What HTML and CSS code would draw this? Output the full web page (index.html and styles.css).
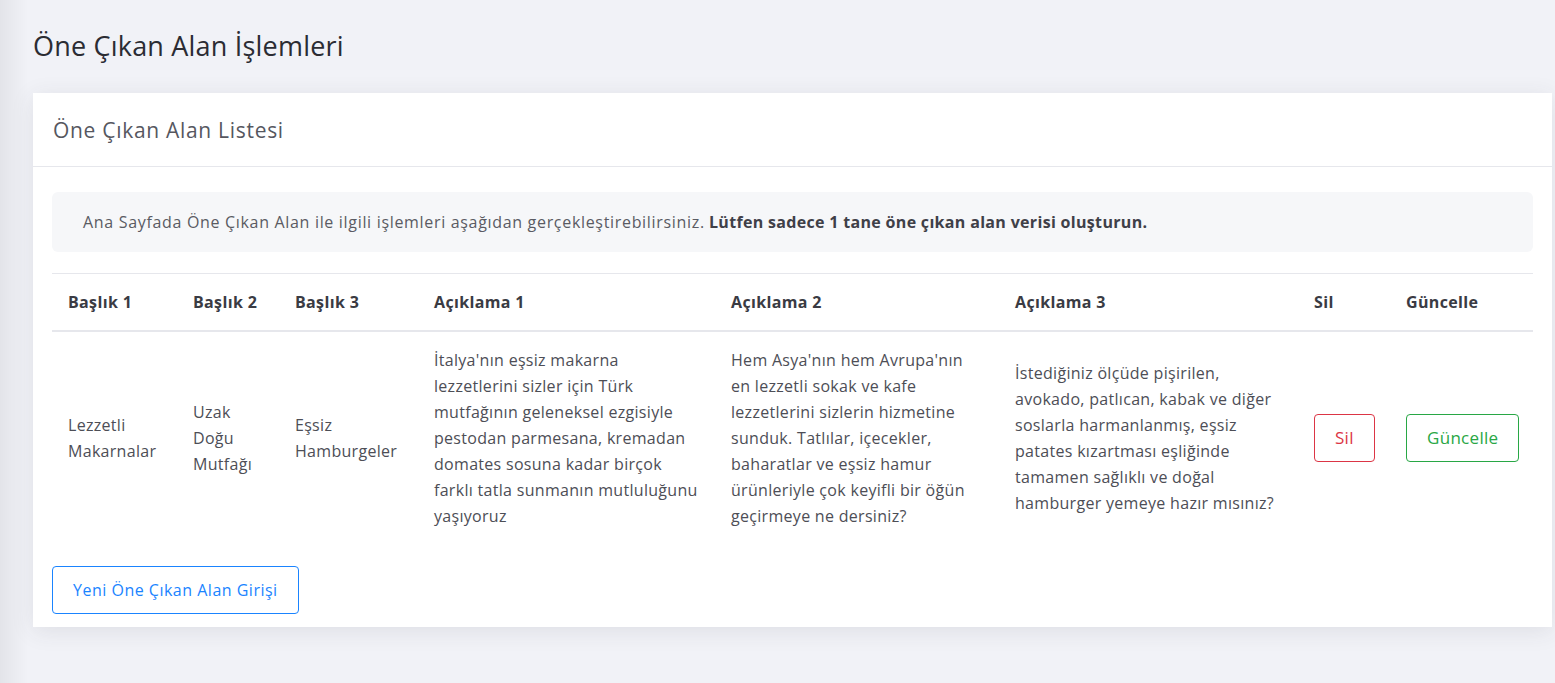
FILE: index.html
```html
<!DOCTYPE html>
<html lang="tr">
<head>
<meta charset="utf-8">
<title>Öne Çıkan Alan İşlemleri</title>
<link rel="stylesheet" href="styles.css">
</head>
<body>
<main class="page">
  <h1 class="page-title">Öne Çıkan Alan İşlemleri</h1>
  <section class="card">
    <header class="card-header">Öne Çıkan Alan Listesi</header>
    <div class="card-body">
      <div class="alert"><span class="alert-text">Ana Sayfada Öne Çıkan Alan ile ilgili işlemleri aşağıdan gerçekleştirebilirsiniz.</span> <strong>Lütfen sadece 1 tane öne çıkan alan verisi oluşturun.</strong></div>
      <table class="table">
        <colgroup>
          <col class="c1"><col class="c2"><col class="c3"><col class="c4"><col class="c5"><col class="c6"><col class="c7"><col class="c8">
        </colgroup>
        <thead>
          <tr>
            <th>Başlık 1</th>
            <th>Başlık 2</th>
            <th>Başlık 3</th>
            <th>Açıklama 1</th>
            <th>Açıklama 2</th>
            <th>Açıklama 3</th>
            <th>Sil</th>
            <th>Güncelle</th>
          </tr>
        </thead>
        <tbody>
          <tr>
            <td>Lezzetli<br>Makarnalar</td>
            <td>Uzak<br>Doğu<br>Mutfağı</td>
            <td>Eşsiz<br>Hamburgeler</td>
            <td>İtalya'nın eşsiz makarna<br>lezzetlerini sizler için Türk<br>mutfağının geleneksel ezgisiyle<br>pestodan parmesana, kremadan<br>domates sosuna kadar birçok<br>farklı tatla sunmanın mutluluğunu<br>yaşıyoruz</td>
            <td>Hem Asya'nın hem Avrupa'nın<br>en lezzetli sokak ve kafe<br>lezzetlerini sizlerin hizmetine<br>sunduk. Tatlılar, içecekler,<br>baharatlar ve eşsiz hamur<br>ürünleriyle çok keyifli bir öğün<br>geçirmeye ne dersiniz?</td>
            <td>İstediğiniz ölçüde pişirilen,<br>avokado, patlıcan, kabak ve diğer<br>soslarla harmanlanmış, eşsiz<br>patates kızartması eşliğinde<br>tamamen sağlıklı ve doğal<br>hamburger yemeye hazır mısınız?</td>
            <td><a class="btn btn-danger" href="#">Sil</a></td>
            <td><a class="btn btn-success" href="#">Güncelle</a></td>
          </tr>
        </tbody>
      </table>
      <a class="btn btn-primary btn-new" href="#">Yeni Öne Çıkan Alan Girişi</a>
    </div>
  </section>
</main>
</body>
</html>
```

FILE: styles.css
```css
html, body {
  margin: 0;
  padding: 0;
}

body {
  background-color: #f1f2f7;
  background-image: linear-gradient(to right, #e3e4e9 0, rgba(241, 242, 247, 0) 28px);
  font-family: "Open Sans", "Liberation Sans", sans-serif;
  font-size: 16px;
  color: #505159;
  min-height: 683px;
}

.page {
  padding: 29px 3px 40px 33px;
}

.page-title {
  margin: 0 0 30px;
  font-size: 27px;
  line-height: 34px;
  font-weight: 400;
  letter-spacing: 0.2px;
  color: #2b2c33;
}

.card {
  background: #fff;
  box-shadow: 0 4px 22px rgba(58, 59, 69, 0.10);
}

.card-header {
  padding: 23px 20px 22px;
  font-size: 21px;
  line-height: 28px;
  letter-spacing: 0.7px;
  color: #56575f;
  border-bottom: 1px solid #e6e7ec;
}

.card-body {
  padding: 25px 19px 13px;
}

.alert {
  background: #f6f7f9;
  border-radius: 6px;
  padding: 18px 31px;
  line-height: 24px;
  color: #5a5b63;
  margin-bottom: 21px;
  white-space: nowrap;
}

.alert-text {
  letter-spacing: 0.68px;
}

.alert strong {
  color: #3f4048;
  font-weight: 700;
  letter-spacing: 0.32px;
}

.table {
  width: 100%;
  border-collapse: collapse;
  table-layout: fixed;
  border-top: 1px solid #e6e7ec;
}

.c1 { width: 125px; }
.c2 { width: 102px; }
.c3 { width: 139px; }
.c4 { width: 297px; }
.c5 { width: 284px; }
.c6 { width: 299px; }
.c7 { width: 92px; }
.c8 { width: 143px; }

.table th,
.table td {
  padding: 15px 6px 15px 16px;
  line-height: 26px;
  text-align: left;
  vertical-align: middle;
}

.table th {
  font-weight: 700;
  color: #3a3b43;
  letter-spacing: 0.35px;
  border-bottom: 2px solid #e6e7ec;
}

.table td {
  color: #4d4e56;
  letter-spacing: 0.3px;
  white-space: nowrap;
}

.btn {
  display: inline-block;
  text-decoration: none;
  font-size: 17px;
  line-height: 26px;
  letter-spacing: 0.3px;
  padding: 10px 20px;
  border: 1px solid;
  border-radius: 4px;
  background: #fff;
  white-space: nowrap;
}

.btn-danger {
  color: #dc3545;
  border-color: #dc3545;
}

.btn-success {
  color: #28a745;
  border-color: #28a745;
}

.btn-primary {
  color: #1a84ff;
  border-color: #1a84ff;
}

.btn-new {
  margin-top: 22px;
  font-size: 16px;
  letter-spacing: 0.5px;
}
```
